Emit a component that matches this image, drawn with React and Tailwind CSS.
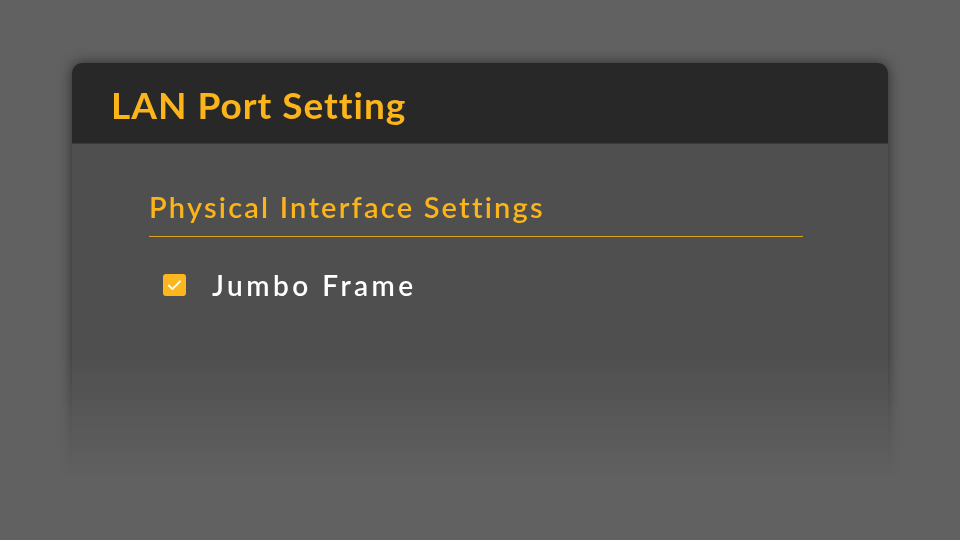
import { Check } from 'lucide-react'

export default function App() {
  return (
    <div className="w-[960px] h-[540px] bg-[#616161] overflow-hidden" style={{ fontFamily: 'Lato, "Open Sans", sans-serif' }}>
      <div className="pt-[33px] px-[42px] pb-[10px] [mask-image:linear-gradient(to_bottom,black_72%,transparent_97%)]">
        <div className="w-[816px] h-[420px] mx-[30px] mt-[30px] rounded-t-[10px] bg-[#4f4f4f] shadow-[0_0_14px_rgba(0,0,0,0.55)] overflow-hidden flex flex-col">
          <div className="h-[81px] bg-[#282828] flex items-center pl-[39px] border-b border-[#3a3a3a]">
            <h1 className="text-[37px] font-bold text-[#fbb41a] tracking-[1px] leading-none mt-[2px]">LAN Port Setting</h1>
          </div>
          <div className="pl-[77px] pr-[85px] pt-[48px]">
            <h2 className="text-[29px] font-semibold text-[#fbb41a] tracking-[2.2px] leading-none pb-[15px] border-b border-[#d9a11c]">Physical Interface Settings</h2>
            <label className="flex items-center mt-[34px] pl-[14px]">
              <span className="w-[23px] h-[22px] rounded-[3px] bg-[#fdb71e] flex items-center justify-center">
                <Check className="w-[17px] h-[17px] text-white" strokeWidth={2.5} />
              </span>
              <span className="ml-[26px] text-[28px] font-semibold text-white tracking-[3.5px] leading-none">Jumbo Frame</span>
            </label>
          </div>
        </div>
      </div>
    </div>
  )
}
